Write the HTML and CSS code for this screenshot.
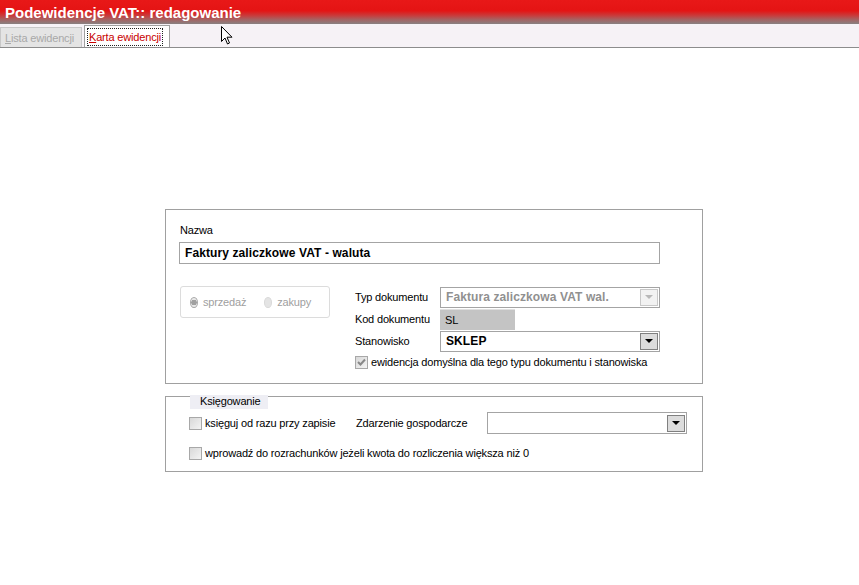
FILE: index.html
```html
<!DOCTYPE html>
<html lang="pl">
<head>
    <meta charset="UTF-8">
    <title>Podewidencje VAT:: redagowanie</title>
    <link rel="stylesheet" href="styles.css">
</head>
<body>
    <div class="titlebar">Podewidencje VAT:: redagowanie</div>
    <div class="tabs">
        <div class="tab tab-off"><u>L</u>ista ewidencji</div>
        <div class="tab tab-on"><span class="focus"><u>K</u>arta ewidencji</span></div>
        <svg class="cursor" width="12" height="19" viewBox="0 0 12 19">
            <path d="M0.5 0.5 L0.5 15.5 L4 12 L6.5 18 L8.5 17 L6 11.2 L11 11.2 Z" fill="#fff" stroke="#000" stroke-width="1"/>
        </svg>
    </div>

    <main class="form">
        <section class="panel panel-main">
            <div class="label">Nazwa</div>
            <div class="input name-input">Faktury zaliczkowe VAT - waluta</div>

            <div class="details">
                <div class="radio-box">
                    <span class="radio checked"></span><span class="radio-text">sprzedaż</span>
                    <span class="radio"></span><span class="radio-text">zakupy</span>
                </div>
                <div class="fields">
                    <div class="field-row">
                        <span class="field-label">Typ dokumentu</span>
                        <div class="combo combo-disabled">
                            <span class="combo-text">Faktura zaliczkowa VAT wal.</span>
                            <span class="combo-btn"><span class="arrow"></span></span>
                        </div>
                    </div>
                    <div class="field-row">
                        <span class="field-label">Kod dokumentu</span>
                        <div class="code">SL</div>
                    </div>
                    <div class="field-row">
                        <span class="field-label">Stanowisko</span>
                        <div class="combo">
                            <span class="combo-text">SKLEP</span>
                            <span class="combo-btn"><span class="arrow"></span></span>
                        </div>
                    </div>
                    <div class="check-row">
                        <span class="checkbox checked-grey">
                            <svg width="9" height="9" viewBox="0 0 9 9"><path d="M1 4 L3.5 6.5 L8 1.5" fill="none" stroke="#888" stroke-width="2"/></svg>
                        </span>
                        <span>ewidencja domyślna dla tego typu dokumentu i stanowiska</span>
                    </div>
                </div>
            </div>
        </section>

        <section class="panel panel-book">
            <div class="legend">Księgowanie</div>
            <div class="book-row">
                <span class="checkbox"></span>
                <span class="book-text">księguj od razu przy zapisie</span>
                <span class="event-label">Zdarzenie gospodarcze</span>
                <div class="combo combo-event">
                    <span class="combo-text"></span>
                    <span class="combo-btn"><span class="arrow"></span></span>
                </div>
            </div>
            <div class="book-row">
                <span class="checkbox"></span>
                <span>wprowadź do rozrachunków jeżeli kwota do rozliczenia większa niż 0</span>
            </div>
        </section>
    </main>
</body>
</html>
```

FILE: styles.css
```css
body {
    margin: 0;
    background: #fff;
    font-family: 'Liberation Sans', Arial, sans-serif;
    font-size: 11px;
    letter-spacing: -0.17px;
    color: #000;
}
.titlebar {
    height: 24px;
    line-height: 25px;
    padding-left: 5px;
    color: #fff;
    font-size: 15px;
    font-weight: bold;
    letter-spacing: 0;
    background: linear-gradient(#e81818 0%, #e41414 45%, #c83c3c 65%, #a46464 82%, #888080 100%);
}
.tabs {
    position: relative;
    display: flex;
    align-items: flex-end;
    height: 23px;
    background: #f6f2f6;
    border-bottom: 1px solid #8c8c8c;
}
.tab {
    height: 20px;
    line-height: 20px;
    font-size: 11px;
    box-sizing: border-box;
}
.tab-off {
    width: 82px;
    padding-left: 4px;
    color: #a8a8a8;
    background: #e4e4e4;
    border: 1px solid #c8c8c8;
    border-bottom: none;
}
.tab-on {
    width: 86px;
    height: 22px;
    margin-left: 2px;
    padding: 2px 0 0 2px;
    background: #fff;
    color: #c80000;
    border: 1px solid #a0a0a0;
    border-bottom: none;
    line-height: 16px;
}
.focus {
    display: inline-block;
    padding: 0 1px;
    border: 1px dotted #222;
}
.cursor {
    position: absolute;
    left: 221px;
    top: 2px;
}
.form {
    width: 538px;
    margin: 161px 0 0 165px;
}
.panel {
    position: relative;
    box-sizing: border-box;
    border: 1px solid #a0a0a0;
}
.panel-main {
    height: 175px;
    padding: 14px 0 0 14px;
}
.label {
    height: 12px;
    line-height: 12px;
}
.input {
    box-sizing: border-box;
    width: 481px;
    height: 22px;
    margin: 6px 0 0 -1px;
    padding-left: 5px;
    border: 1px solid #a4a4a4;
    line-height: 20px;
    font-weight: bold;
    font-size: 12px;
    letter-spacing: 0.1px;
}
.details {
    display: flex;
    margin-top: 22px;
}
.radio-box {
    display: flex;
    align-items: center;
    box-sizing: border-box;
    width: 150px;
    height: 32px;
    padding-left: 9px;
    border: 1px solid #dcdcdc;
    border-radius: 3px;
    color: #a0a0a0;
}
.radio {
    width: 11px;
    height: 11px;
    margin-right: 5px;
    border-radius: 50%;
    background: #e4e4e4;
    box-sizing: border-box;
    border: 1px solid #d8d8d8;
}
.radio.checked {
    border: 1px solid #a8a8a8;
    background: radial-gradient(circle, #a0a0a0 0 2.5px, #e8e8e8 3px);
}
.radio-text {
    margin-right: 18px;
}
.fields {
    margin-left: 25px;
}
.field-row {
    display: flex;
    align-items: center;
    height: 22px;
}
.field-label {
    width: 85px;
}
.combo {
    display: flex;
    align-items: center;
    box-sizing: border-box;
    width: 220px;
    height: 21px;
    border: 1px solid #a4a4a4;
    font-weight: bold;
    font-size: 12px;
    letter-spacing: 0.1px;
}
.combo-text {
    flex: 1;
    padding-left: 5px;
}
.combo-disabled {
    color: #909090;
}
.combo-btn {
    display: flex;
    align-items: center;
    justify-content: center;
    box-sizing: border-box;
    width: 18px;
    height: 17px;
    margin-right: 1px;
    background: #dcdcdc;
    border: 1px solid #808080;
}
.combo-disabled .combo-btn {
    background: #f2f2f2;
    border-color: #c8c8c8;
}
.arrow {
    width: 0;
    height: 0;
    border-left: 4px solid transparent;
    border-right: 4px solid transparent;
    border-top: 4px solid #000;
}
.combo-disabled .arrow {
    border-top-color: #b8b8b8;
}
.code {
    box-sizing: border-box;
    width: 75px;
    height: 21px;
    line-height: 21px;
    padding-left: 5px;
    background: #c4c4c4;
    border-top: 1px solid #e0e0e0;
}
.check-row {
    display: flex;
    align-items: center;
    height: 18px;
    margin-top: 1px;
}
.checkbox {
    display: inline-flex;
    align-items: center;
    justify-content: center;
    box-sizing: border-box;
    width: 13px;
    height: 13px;
    margin-right: 3px;
    border: 1px solid #a8a8a8;
    background: linear-gradient(135deg, #d8d8d8, #f4f4f4);
}
.panel-book {
    height: 76px;
    margin-top: 12px;
    padding: 15px 0 0 23px;
}
.legend {
    position: absolute;
    left: 24px;
    top: -2px;
    width: 78px;
    height: 14px;
    line-height: 13px;
    padding-left: 10px;
    box-sizing: border-box;
    background: #eeeef4;
}
.book-row {
    display: flex;
    align-items: center;
    height: 22px;
    margin-bottom: 8px;
}
.book-text {
    width: 151px;
}
.event-label {
    width: 131px;
}
.combo-event {
    width: 200px;
    height: 22px;
}
```
